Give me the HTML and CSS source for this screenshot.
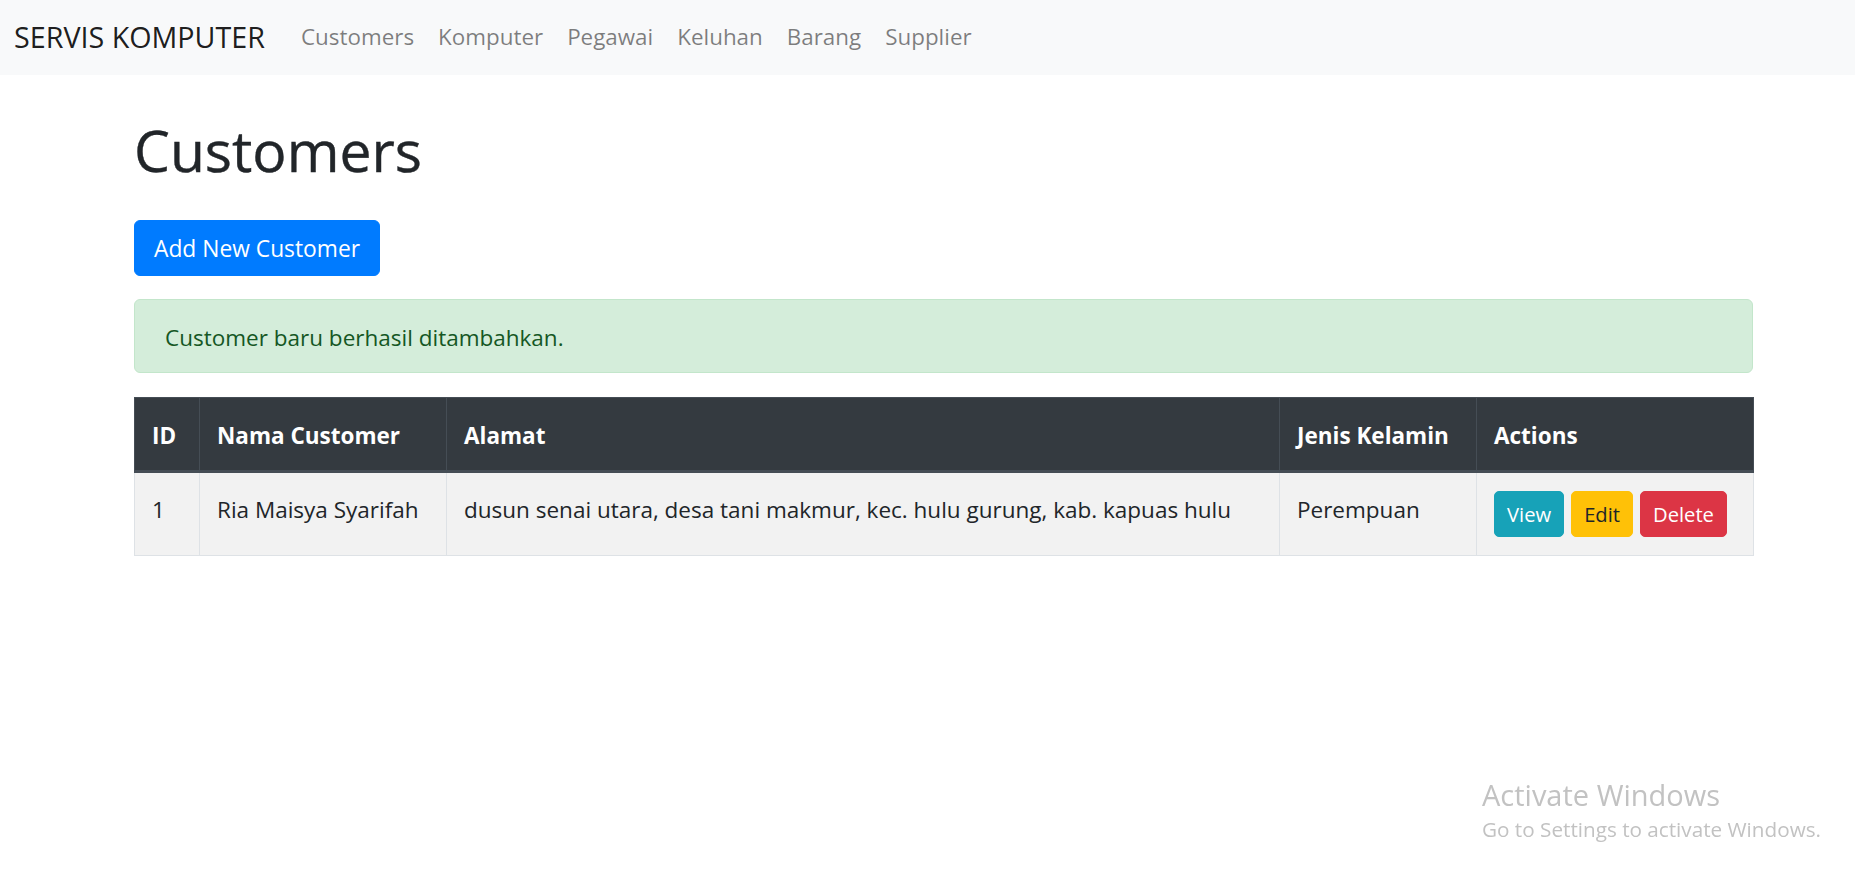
FILE: index.html
```html
<!DOCTYPE html>
<html lang="id">
<head>
<meta charset="utf-8">
<title>Customers</title>
<link rel="stylesheet" href="styles.css">
</head>
<body>
<nav class="navbar">
  <a class="brand" href="#">SERVIS KOMPUTER</a>
  <ul class="nav-links">
    <li><a href="#">Customers</a></li>
    <li><a href="#">Komputer</a></li>
    <li><a href="#">Pegawai</a></li>
    <li><a href="#">Keluhan</a></li>
    <li><a href="#">Barang</a></li>
    <li><a href="#">Supplier</a></li>
  </ul>
</nav>
<main class="container">
  <h1 class="title">Customers</h1>
  <a class="btn btn-primary" href="#">Add New Customer</a>
  <div class="alert">Customer baru berhasil ditambahkan.</div>
  <table class="table">
    <colgroup>
      <col class="c-id"><col class="c-nama"><col class="c-alamat"><col class="c-jk"><col class="c-act">
    </colgroup>
    <thead>
      <tr>
        <th>ID</th>
        <th>Nama Customer</th>
        <th>Alamat</th>
        <th>Jenis Kelamin</th>
        <th>Actions</th>
      </tr>
    </thead>
    <tbody>
      <tr>
        <td>1</td>
        <td>Ria Maisya Syarifah</td>
        <td>dusun senai utara, desa tani makmur, kec. hulu gurung, kab. kapuas hulu</td>
        <td>Perempuan</td>
        <td class="act-cell">
          <div class="actions">
            <a class="btn-sm btn-info" href="#">View</a>
            <a class="btn-sm btn-warning" href="#">Edit</a>
            <a class="btn-sm btn-danger" href="#">Delete</a>
          </div>
        </td>
      </tr>
    </tbody>
  </table>
</main>
<div class="watermark">
  <div class="wm-title">Activate Windows</div>
  <div class="wm-sub">Go to Settings to activate Windows.</div>
</div>
</body>
</html>
```
FILE: styles.css
```css
* { box-sizing: border-box; }
html, body { margin: 0; padding: 0; }
body {
  font-family: "Open Sans", "Noto Sans", sans-serif;
  font-size: 22.5px;
  line-height: 36px;
  color: #212529;
  background: #fff;
  width: 1855px;
  height: 876px;
  overflow: hidden;
}
a { text-decoration: none; }

.navbar {
  height: 75px;
  background: #f8f9fa;
  display: flex;
  align-items: center;
  padding: 0 0 2px 14px;
}
.brand {
  font-size: 28.7px;
  color: rgba(0,0,0,.9);
  margin-right: 24px;
  line-height: 45px;
}
.nav-links {
  list-style: none;
  margin: 0;
  padding: 0;
  display: flex;
}
.nav-links a {
  display: block;
  padding: 0 12px;
  color: rgba(0,0,0,.5);
  font-size: 22.4px;
}

.container {
  width: 1619px;
  margin-left: 134px;
}
.title {
  font-size: 57px;
  font-weight: 400;
  line-height: 72px;
  margin: 39px 0 34px;
  color: #212529;
  -webkit-text-stroke: 0.4px #212529;
}
.btn {
  display: inline-block;
  font-size: 22.8px;
  line-height: 36px;
  padding: 10px 19px 8px;
  border: 1px solid transparent;
  border-radius: 6px;
}
.btn-primary {
  background: #007bff;
  border-color: #007bff;
  color: #fff;
}
.alert {
  margin-top: 23px;
  margin-bottom: 24px;
  background: #d4edda;
  border: 1.5px solid #c3e6cb;
  color: #155724;
  border-radius: 6px;
  padding: 20px 30px 16px;
  line-height: 36px;
}

.table {
  width: 1619px;
  border-collapse: collapse;
  table-layout: fixed;
  border: 1px solid #dee2e6;
}
.c-id { width: 65px; }
.c-nama { width: 247px; }
.c-alamat { width: 833px; }
.c-jk { width: 197px; }
.c-act { width: 277px; }
.table th {
  background: #343a40;
  color: #fff;
  font-weight: 700;
  text-align: left;
  padding: 20px 17px 16px;
  border: 1px solid #454d55;
  border-bottom: 3px solid #454d55;
  line-height: 36px;
  white-space: nowrap;
}
.table td {
  background: #f2f2f2;
  padding: 19px 17px 17px;
  border: 1px solid #dee2e6;
  vertical-align: top;
  line-height: 36px;
  white-space: nowrap;
}
.table td.act-cell {
  padding: 18px 17px;
}
.actions {
  display: flex;
  gap: 7px;
}
.btn-sm {
  display: inline-block;
  font-size: 20.2px;
  line-height: 31.5px;
  padding: 7px 12px 5px;
  border: 1px solid transparent;
  border-radius: 5px;
}
.btn-info { background: #17a2b8; border-color: #17a2b8; color: #fff; }
.btn-warning { background: #ffc107; border-color: #ffc107; color: #212529; }
.btn-danger { background: #dc3545; border-color: #dc3545; color: #fff; }

.watermark {
  position: fixed;
  left: 1482px;
  top: 776px;
  color: #c2c2c2;
}
.wm-title {
  font-size: 29px;
  line-height: 38px;
  font-weight: 400;
}
.wm-sub {
  font-size: 20.7px;
  line-height: 30px;
}
```
